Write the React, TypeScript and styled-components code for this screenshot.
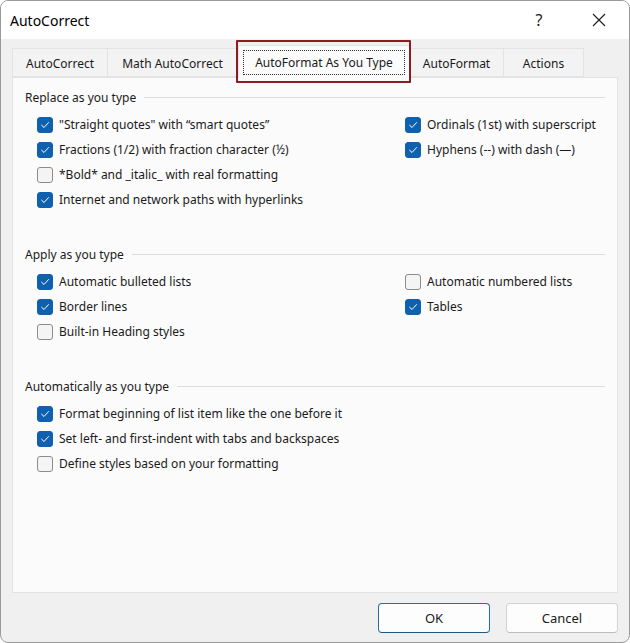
import React from "react";
import styled, { createGlobalStyle } from "styled-components";

const Global = createGlobalStyle`
  html, body { margin: 0; padding: 0; background: #ffffff; }
  body { font-family: "Segoe UI", "Noto Sans", "Open Sans", sans-serif; color: #1a1a1a; }
  * { box-sizing: border-box; }
`;

const Window = styled.div`
  width: 630px;
  height: 643px;
  position: relative;
  display: flex;
  flex-direction: column;
  background: #f0f0f0;
  border: 1px solid #9a9a9a;
  border-radius: 8px;
  overflow: hidden;
`;

const TitleBar = styled.div`
  height: 38px;
  background: #ffffff;
  display: flex;
  align-items: center;
  padding-left: 9px;
  flex: none;
`;

const Title = styled.div`
  font-size: 14px;
  flex: 1;
  color: #000;
`;

const TitleButton = styled.div`
  width: 60px;
  height: 38px;
  display: flex;
  align-items: center;
  justify-content: center;
  font-size: 16px;
  color: #222;
`;

const Body = styled.div`
  flex: 1;
  display: flex;
  flex-direction: column;
  padding: 7px 11px 0 11px;
`;

const TabRow = styled.div`
  display: flex;
  align-items: flex-end;
  height: 31px;
  position: relative;
  z-index: 1;
`;

const Tab = styled.div<{ $active?: boolean; $w: number }>`
  width: ${(p) => p.$w}px;
  height: ${(p) => (p.$active ? 33 : 29)}px;
  margin-bottom: ${(p) => (p.$active ? -1 : 0)}px;
  display: flex;
  align-items: center;
  justify-content: center;
  font-size: 12px;
  color: #1a1a1a;
  background: ${(p) => (p.$active ? "#fbfbfb" : "#f3f3f3")};
  border: 1px solid #e3e3e3;
  border-bottom: ${(p) => (p.$active ? "none" : "1px solid #e3e3e3")};
  border-left: ${(p) => (p.$active ? "1px solid #e3e3e3" : "none")};
  &:first-child { border-left: 1px solid #e3e3e3; }
  padding: ${(p) => (p.$active ? "4px 4px 3px" : "1px 0 0")};
`;

const FocusRect = styled.div`
  border: 1px dotted #333;
  width: 100%;
  height: 100%;
  display: flex;
  align-items: center;
  justify-content: center;
`;

const Highlight = styled.div`
  position: absolute;
  left: 235px;
  top: 39px;
  width: 175px;
  height: 43px;
  border: 2px solid #8a1c22;
  border-radius: 1px;
  z-index: 5;
  pointer-events: none;
`;

const Panel = styled.div`
  width: 606px;
  height: 516px;
  background: #fbfbfb;
  border: 1px solid #e3e3e3;
  padding: 10px 12px 0 12px;
  display: flex;
  flex-direction: column;
`;

const Section = styled.div`
  display: flex;
  flex-direction: column;
  margin-bottom: 33px;
`;

const SectionHeader = styled.div`
  display: flex;
  align-items: center;
  gap: 8px;
  font-size: 12px;
  height: 18px;
  margin-bottom: 6px;
  &::after {
    content: "";
    flex: 1;
    height: 1px;
    background: #dcdcdc;
  }
`;

const Grid = styled.div`
  display: grid;
  grid-template-columns: 368px 1fr;
  grid-auto-rows: 25px;
  padding-left: 12px;
`;

const Row = styled.label<{ $col?: number }>`
  display: flex;
  align-items: center;
  gap: 6px;
  font-size: 12px;
  color: #1a1a1a;
  grid-column: ${(p) => p.$col ?? 1};
  white-space: nowrap;
`;

const Box = styled.span<{ $checked: boolean }>`
  width: 16px;
  height: 16px;
  border-radius: 3px;
  flex: none;
  display: flex;
  align-items: center;
  justify-content: center;
  background: ${(p) => (p.$checked ? "#1060b0" : "#f4f4f4")};
  border: 1px solid ${(p) => (p.$checked ? "#1060b0" : "#8c8c8c")};
`;

const Footer = styled.div`
  display: flex;
  justify-content: flex-end;
  gap: 16px;
  padding: 10px 0 0 0;
`;

const Button = styled.button<{ $default?: boolean }>`
  width: 112px;
  height: 30px;
  border-radius: 4px;
  font-family: inherit;
  font-size: 13px;
  color: #1a1a1a;
  background: #fdfdfd;
  border: 1px solid ${(p) => (p.$default ? "#2a6f9a" : "#d2d2d2")};
  border-bottom-color: ${(p) => (p.$default ? "#1b5a80" : "#bcbcbc")};
`;

const Check = () => (
  <svg width="10" height="10" viewBox="0 0 10 10">
    <path d="M1.6 5.2 L4 7.5 L8.5 2.6" fill="none" stroke="#fff" strokeWidth="1" strokeLinecap="round" strokeLinejoin="round" />
  </svg>
);

type Item = { label: string; checked: boolean; col?: number; row?: number };

const CheckRow = ({ label, checked, col, row }: Item) => (
  <Row $col={col} style={row ? { gridRow: row } : undefined}>
    <Box $checked={checked}>{checked && <Check />}</Box>
    {label}
  </Row>
);

const sections: { title: string; items: Item[] }[] = [
  {
    title: "Replace as you type",
    items: [
      { label: "\"Straight quotes\" with \u201Csmart quotes\u201D", checked: true, col: 1, row: 1 },
      { label: "Ordinals (1st) with superscript", checked: true, col: 2, row: 1 },
      { label: "Fractions (1/2) with fraction character (\u00BD)", checked: true, col: 1, row: 2 },
      { label: "Hyphens (--) with dash (\u2014)", checked: true, col: 2, row: 2 },
      { label: "*Bold* and _italic_ with real formatting", checked: false, col: 1, row: 3 },
      { label: "Internet and network paths with hyperlinks", checked: true, col: 1, row: 4 },
    ],
  },
  {
    title: "Apply as you type",
    items: [
      { label: "Automatic bulleted lists", checked: true, col: 1, row: 1 },
      { label: "Automatic numbered lists", checked: false, col: 2, row: 1 },
      { label: "Border lines", checked: true, col: 1, row: 2 },
      { label: "Tables", checked: true, col: 2, row: 2 },
      { label: "Built-in Heading styles", checked: false, col: 1, row: 3 },
    ],
  },
  {
    title: "Automatically as you type",
    items: [
      { label: "Format beginning of list item like the one before it", checked: true, col: 1, row: 1 },
      { label: "Set left- and first-indent with tabs and backspaces", checked: true, col: 1, row: 2 },
      { label: "Define styles based on your formatting", checked: false, col: 1, row: 3 },
    ],
  },
];

export default function App() {
  return (
    <>
      <Global />
      <Window>
        <TitleBar>
          <Title>AutoCorrect</Title>
          <TitleButton>?</TitleButton>
          <TitleButton>
            <svg width="14" height="14" viewBox="0 0 14 14">
              <path d="M1 1 L13 13 M13 1 L1 13" stroke="#222" strokeWidth="1.2" />
            </svg>
          </TitleButton>
        </TitleBar>
        <Body>
          <TabRow>
            <Tab $w={96}>AutoCorrect</Tab>
            <Tab $w={130}>Math AutoCorrect</Tab>
            <Tab $w={172} $active>
              <FocusRect>AutoFormat As You Type</FocusRect>
            </Tab>
            <Tab $w={94}>AutoFormat</Tab>
            <Tab $w={80}>Actions</Tab>
          </TabRow>
          <Panel>
            {sections.map((s) => (
              <Section key={s.title}>
                <SectionHeader>{s.title}</SectionHeader>
                <Grid>
                  {s.items.map((it) => (
                    <CheckRow key={it.label} {...it} />
                  ))}
                </Grid>
              </Section>
            ))}
          </Panel>
          <Footer>
            <Button $default>OK</Button>
            <Button>Cancel</Button>
          </Footer>
        </Body>
        <Highlight />
      </Window>
    </>
  );
}
